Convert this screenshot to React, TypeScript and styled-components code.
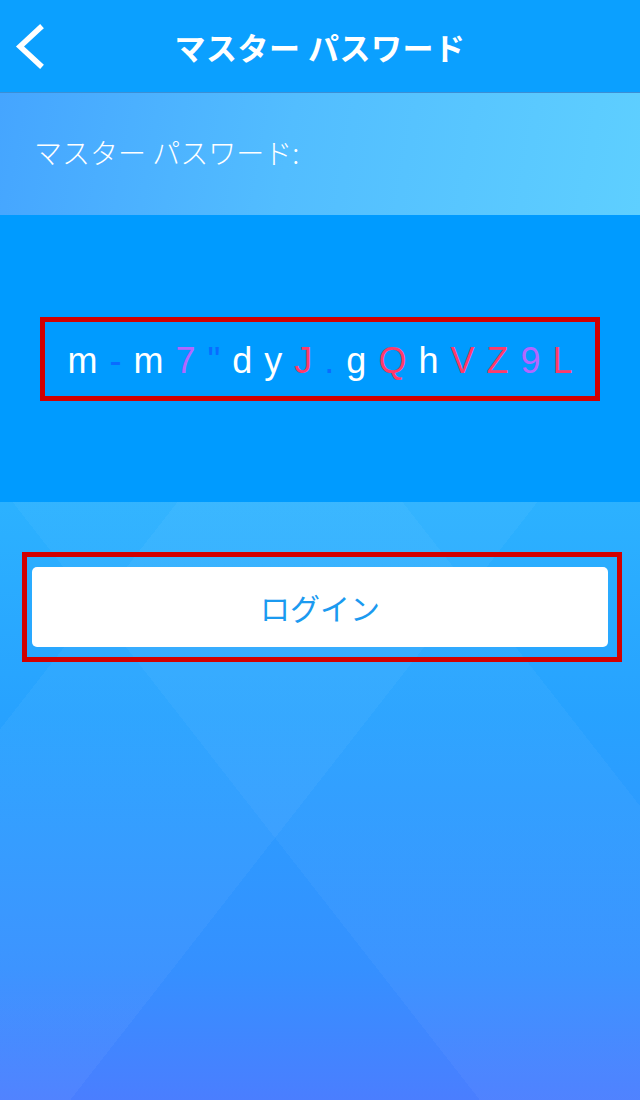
import styled, { createGlobalStyle } from "styled-components";

const GlobalStyle = createGlobalStyle`
  html, body {
    margin: 0;
    padding: 0;
  }
  body {
    font-family: "Noto Sans CJK JP", "Noto Sans", sans-serif;
    -webkit-font-smoothing: antialiased;
  }
  * {
    box-sizing: border-box;
  }
`;

const Screen = styled.div`
  width: 640px;
  min-height: 1100px;
  display: flex;
  flex-direction: column;
  background:
    linear-gradient(52deg, rgba(255, 255, 255, 0) 0 32%, rgba(255, 255, 255, 0.035) 32% 58%, rgba(255, 255, 255, 0) 58%),
    linear-gradient(-52deg, rgba(255, 255, 255, 0) 0 38%, rgba(255, 255, 255, 0.04) 38% 62%, rgba(255, 255, 255, 0) 62%),
    linear-gradient(180deg, #43a9ff 0%, #2cb2ff 45%, #27a2ff 65%, #3590ff 88%, #4a7eff 100%);
`;

const Header = styled.header`
  height: 93px;
  display: grid;
  grid-template-columns: 1fr auto 1fr;
  align-items: center;
  background: #0ba0ff;
  border-bottom: 1px solid #3b8fd6;
`;

const BackButton = styled.button`
  justify-self: start;
  display: flex;
  align-items: center;
  padding: 0 0 0 13px;
  border: none;
  background: none;
  cursor: pointer;
`;

const Title = styled.h1`
  margin: 0;
  font-size: 31px;
  font-weight: 700;
  color: #ffffff;
  letter-spacing: 0.5px;
`;

const LabelBand = styled.div`
  height: 122px;
  display: flex;
  align-items: center;
  padding-left: 34px;
  background: linear-gradient(100deg, #45a5ff 0%, #52bdff 45%, #5ecfff 100%);
`;

const Label = styled.span`
  font-size: 28px;
  font-weight: 300;
  color: #ffffff;
  padding-bottom: 4px;
`;

const PasswordPanel = styled.section`
  height: 287px;
  display: flex;
  align-items: center;
  padding: 0 40px;
  background: #009bff;
`;

const Highlight = styled.div`
  flex: 1;
  height: 84px;
  display: flex;
  align-items: center;
  justify-content: center;
  border: 5px solid #d20000;
`;

const PasswordRow = styled.div`
  display: flex;
  gap: 12px;
  font-family: "Liberation Sans", Arial, sans-serif;
  font-size: 36px;
  line-height: 1;
  padding-top: 4px;
`;

type CharKind = "lower" | "upper" | "digit" | "symbol";

const charColors: Record<CharKind, string> = {
  lower: "#ffffff",
  upper: "#ff3a6a",
  digit: "#b466ff",
  symbol: "#0a6cff",
};

const Char = styled.span<{ $kind: CharKind }>`
  color: ${(props) => charColors[props.$kind]};
`;

const Actions = styled.div`
  padding: 50px 18px 0 22px;
`;

const ButtonHighlight = styled.div`
  border: 5px solid #d20000;
  padding: 10px 9px 10px 5px;
`;

const LoginButton = styled.button`
  width: 100%;
  height: 80px;
  border: none;
  border-radius: 5px;
  background: #ffffff;
  color: #1b9af0;
  font-family: "Noto Sans CJK JP", "Noto Sans", sans-serif;
  font-size: 30px;
  font-weight: 400;
  cursor: pointer;
`;

const password = `m-m7"dyJ.gQhVZ9L`;

function kindOf(c: string): CharKind {
  if (/[a-z]/.test(c)) return "lower";
  if (/[A-Z]/.test(c)) return "upper";
  if (/[0-9]/.test(c)) return "digit";
  return "symbol";
}

function ChevronLeft() {
  return (
    <svg width="34" height="46" viewBox="0 0 34 46" fill="none">
      <path
        d="M27 5 L7 23.5 L27 42"
        stroke="#ffffff"
        strokeWidth="5.5"
        strokeLinecap="square"
        strokeLinejoin="miter"
      />
    </svg>
  );
}

export default function App() {
  return (
    <>
      <GlobalStyle />
      <Screen>
        <Header>
          <BackButton aria-label="戻る">
            <ChevronLeft />
          </BackButton>
          <Title>マスター パスワード</Title>
          <span />
        </Header>

        <LabelBand>
          <Label>マスター パスワード:</Label>
        </LabelBand>

        <PasswordPanel>
          <Highlight>
            <PasswordRow>
              {password.split("").map((c, i) => (
                <Char key={i} $kind={kindOf(c)}>
                  {c}
                </Char>
              ))}
            </PasswordRow>
          </Highlight>
        </PasswordPanel>

        <Actions>
          <ButtonHighlight>
            <LoginButton>ログイン</LoginButton>
          </ButtonHighlight>
        </Actions>
      </Screen>
    </>
  );
}
